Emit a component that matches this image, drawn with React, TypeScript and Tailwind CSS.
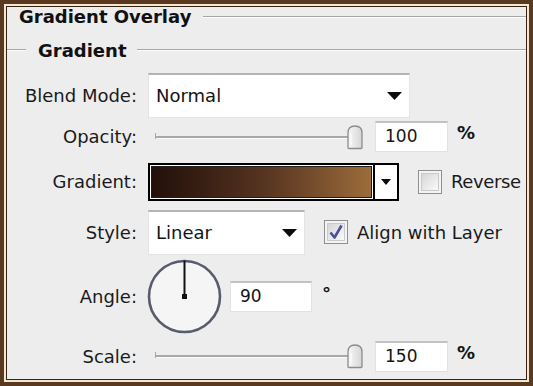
import React from "react";

const font = { fontFamily: '"DejaVu Sans", Verdana, sans-serif' };

function Arrow({ w = 15, h = 8 }: { w?: number; h?: number }) {
  return (
    <svg width={w} height={h} viewBox={`0 0 ${w} ${h}`}>
      <polygon points={`0,0 ${w},0 ${w / 2},${h}`} fill="#0c0c0c" />
    </svg>
  );
}

function Thumb() {
  return (
    <svg width="18" height="26" viewBox="0 0 18 26">
      <defs>
        <linearGradient id="thumbFill" x1="0" y1="0" x2="1" y2="0">
          <stop offset="0" stopColor="#f7f7f7" />
          <stop offset="1" stopColor="#d6d6d6" />
        </linearGradient>
      </defs>
      <path
        d="M2 9 Q2 2 9 2 Q16 2 16 9 L16 23.5 Q16 24.5 15 24.5 L3 24.5 Q2 24.5 2 23.5 Z"
        fill="url(#thumbFill)"
        stroke="#8c8c8c"
        strokeWidth="1.3"
      />
      <path d="M5 10 L5 21" stroke="#ffffff" strokeWidth="1" />
    </svg>
  );
}

function Slider() {
  return (
    <div className="relative w-[215px] h-[26px] flex-none">
      <div className="absolute left-[7px] top-[9px] w-px h-[6px] bg-[#a8a8a8]" />
      <div className="absolute left-[8px] right-[14px] top-[12px] h-[3px] border-t-2 border-[#a8a8a8] border-b border-b-[#fbfbfb]" />
      <div className="absolute left-[198px] top-0">
        <Thumb />
      </div>
    </div>
  );
}

function NumberBox({ value, w }: { value: string; w: string }) {
  return (
    <div
      className={`${w} h-[31px] flex-none flex items-center bg-white border border-[#e2e2e2] border-t-2 border-t-[#c2c2c2] pl-[9px] text-[17px] text-[#141414]`}
    >
      {value}
    </div>
  );
}

function Checkbox({ checked }: { checked?: boolean }) {
  return (
    <div className="w-[24px] h-[24px] flex-none border border-[#8f8f8f] p-[2px] bg-[#f4f4f4]">
      <div className="w-full h-full border border-[#c9c9c9] bg-gradient-to-br from-[#d6d6d6] to-[#fafafa] flex items-center justify-center">
        {checked && (
          <svg width="16" height="16" viewBox="0 0 16 16">
            <path
              d="M2.5 8.5 L6.5 13.5 L13.5 1.5"
              fill="none"
              stroke="#4d4f9c"
              strokeWidth="2.6"
              strokeLinejoin="round"
            />
          </svg>
        )}
      </div>
    </div>
  );
}

function Label({ children }: { children: React.ReactNode }) {
  return (
    <div className="w-[131px] flex-none text-right pr-[1px] text-[18px] text-[#1a1a1a]">
      {children}
    </div>
  );
}

function Dropdown({ value, w }: { value: string; w: string }) {
  return (
    <div
      className={`${w} h-[45px] flex-none flex items-center justify-between bg-white border border-[#e4e4e4] border-t-2 border-t-[#b4b4b4] pl-[7px] pr-[7px] text-[18px] text-[#141414]`}
    >
      <span>{value}</span>
      <Arrow />
    </div>
  );
}

export default function App() {
  return (
    <div className="w-[533px] h-[386px] bg-[#5b3920] p-[4px]" style={font}>
      <div className="w-full h-full border-2 border-[#f3e8d2]">
        <div className="w-full h-full border border-[#3a2213] bg-[#ededed] flex flex-col">
          {/* header */}
          <div className="h-[20px] flex items-center pl-[12px]">
            <span className="text-[18px] leading-[20px] font-bold text-[#111]">
              Gradient Overlay
            </span>
            <div className="flex-1 ml-[12px] border-t border-[#a6a6a6] border-b border-b-[#fcfcfc]" />
          </div>

          <div className="h-[20px] mt-[14px] flex items-center">
            <div className="w-[19px] border-t border-[#a6a6a6] border-b border-b-[#fcfcfc] -mt-[3px]" />
            <span className="ml-[12px] text-[18px] leading-[20px] font-bold text-[#111]">
              Gradient
            </span>
            <div className="flex-1 ml-[11px] border-t border-[#a6a6a6] border-b border-b-[#fcfcfc] -mt-[3px]" />
          </div>

          {/* blend mode */}
          <div className="h-[46px] mt-[11px] flex items-center gap-[10px]">
            <Label>Blend Mode:</Label>
            <Dropdown value="Normal" w="w-[262px]" />
          </div>

          {/* opacity */}
          <div className="h-[37px] flex items-center gap-[10px]">
            <Label>Opacity:</Label>
            <Slider />
            <div className="ml-[2px]">
              <NumberBox value="100" w="w-[73px]" />
            </div>
            <span className="ml-[-1px] -mt-[9px] text-[18px] font-bold text-[#141414]">%</span>
          </div>

          {/* gradient */}
          <div className="h-[53px] flex items-center gap-[10px]">
            <Label>Gradient:</Label>
            <div className="w-[251px] h-[38px] flex-none flex border-2 border-black bg-white">
              <div className="flex-1 p-[1px]">
                <div className="w-full h-full border border-[#1d1d1d] bg-gradient-to-r from-[#22100a] via-[#553320] to-[#9c6c3a]" />
              </div>
              <div className="w-[24px] flex items-center justify-center border-l-2 border-black bg-white">
                <Arrow w={10} h={6} />
              </div>
            </div>
            <div className="ml-[9px]">
              <Checkbox />
            </div>
            <span className="-ml-[1px] text-[18px] tracking-[-0.4px] text-[#1a1a1a]">Reverse</span>
          </div>

          {/* style */}
          <div className="h-[48px] flex items-center gap-[10px]">
            <Label>Style:</Label>
            <Dropdown value="Linear" w="w-[157px]" />
            <div className="ml-[9px]">
              <Checkbox checked />
            </div>
            <span className="-ml-[1px] text-[18px] text-[#1a1a1a]">Align with Layer</span>
          </div>

          {/* angle */}
          <div className="h-[80px] flex items-center gap-[10px]">
            <Label>Angle:</Label>
            <svg width="75" height="75" viewBox="0 0 75 75" className="flex-none -ml-[1px]">
              <circle cx="37.5" cy="37.5" r="35.5" fill="#f5f5f5" stroke="#565c6b" strokeWidth="2.6" />
              <line x1="37.5" y1="1.5" x2="37.5" y2="37.5" stroke="#111" strokeWidth="2" />
              <rect x="35" y="35" width="5" height="5" fill="#111" />
            </svg>
            <div className="ml-[-2px]">
              <NumberBox value="90" w="w-[82px]" />
            </div>
            <span className="ml-[0px] -mt-[6px] text-[18px] font-bold text-[#141414]">°</span>
          </div>

          {/* scale */}
          <div className="h-[40px] flex items-center gap-[10px]">
            <Label>Scale:</Label>
            <Slider />
            <div className="ml-[2px]">
              <NumberBox value="150" w="w-[73px]" />
            </div>
            <span className="ml-[-1px] -mt-[7px] text-[18px] font-bold text-[#141414]">%</span>
          </div>
        </div>
      </div>
    </div>
  );
}
